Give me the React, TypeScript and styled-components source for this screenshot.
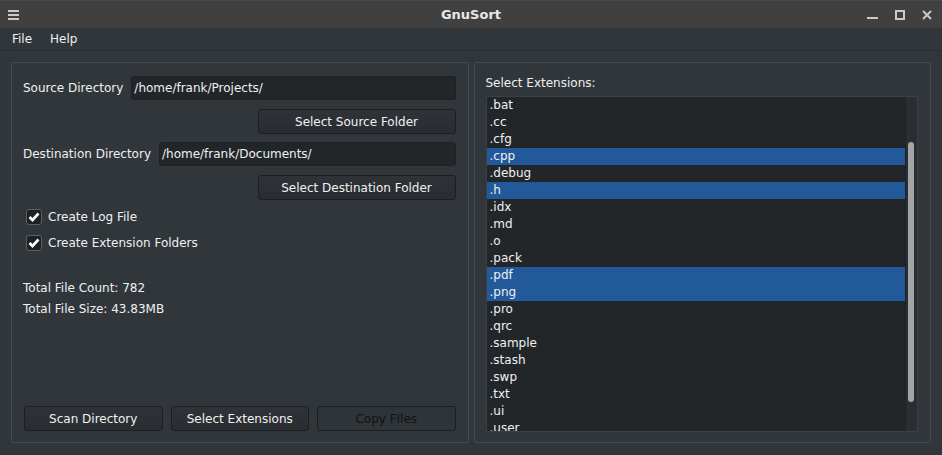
import React, { FC } from "react";
import styled, { createGlobalStyle } from "styled-components";

const GlobalStyle = createGlobalStyle`
  html, body {
    margin: 0;
    padding: 0;
    background: #31363b;
  }
  body {
    font-family: "DejaVu Sans", "Noto Sans", sans-serif;
    font-size: 12px;
    color: #eff0f1;
  }
  * {
    box-sizing: border-box;
  }
`;

const Window = styled.div`
  width: 942px;
  height: 455px;
  display: flex;
  flex-direction: column;
  background: #31363b;
  overflow: hidden;
`;

const TitleBar = styled.div`
  height: 28px;
  flex-shrink: 0;
  background: #404040;
  border-top: 1px solid #4a4a4a;
  display: flex;
  align-items: center;
  padding: 0 8px;
  position: relative;
`;

const Title = styled.div`
  position: absolute;
  left: 0;
  right: 0;
  text-align: center;
  font-weight: bold;
  font-size: 13px;
  color: #e8e8e8;
  pointer-events: none;
`;

const WinControls = styled.div`
  margin-left: auto;
  display: flex;
  align-items: center;
  gap: 17px;
  padding-right: 2px;
`;

const MenuBar = styled.div`
  height: 23px;
  flex-shrink: 0;
  display: flex;
  align-items: center;
  padding-left: 3px;
  border-bottom: 1px solid #2a2e32;
`;

const MenuItem = styled.span`
  padding: 0 9px;
  color: #eff0f1;
`;

const Main = styled.div`
  flex: 1;
  min-height: 0;
  display: flex;
  gap: 5px;
  padding: 11px 11px 12px 11px;
`;

const Panel = styled.div`
  flex: 1;
  min-height: 0;
  border: 1px solid #454a4f;
  border-radius: 2px;
  display: flex;
  flex-direction: column;
`;

const LeftPanel = styled(Panel)`
  padding: 13px 12px 11px 11px;
`;

const RightPanel = styled(Panel)`
  padding: 12px 12px 10px 11px;
`;

const FieldRow = styled.div`
  display: flex;
  align-items: center;
  gap: 8px;
`;

const Label = styled.span`
  white-space: nowrap;
  color: #eff0f1;
`;

const TextInput = styled.div`
  flex: 1;
  height: 24px;
  background: #232629;
  border: 1px solid #1f2225;
  border-radius: 3px;
  display: flex;
  align-items: center;
  padding: 0 2px;
  color: #eff0f1;
`;

const ButtonRow = styled.div`
  display: flex;
  justify-content: flex-end;
  margin: 9px 0 8px;
`;

const Button = styled.button<{ $width?: number; $disabled?: boolean }>`
  width: ${(p) => (p.$width ? `${p.$width}px` : "auto")};
  flex: ${(p) => (p.$width ? "none" : "1")};
  height: 25px;
  font-family: inherit;
  font-size: 12px;
  color: ${(p) => (p.$disabled ? "#111315" : "#eff0f1")};
  background: ${(p) =>
    p.$disabled ? "#2f3438" : "linear-gradient(#2f3337, #292d31)"};
  border: 1px solid #1c1f22;
  border-radius: 3px;
  padding: 0;
`;

const CheckList = styled.div`
  display: flex;
  flex-direction: column;
  gap: 10px;
  margin-top: 1px;
`;

const CheckRow = styled.label`
  display: flex;
  align-items: center;
  gap: 6px;
  height: 16px;
  padding-left: 3px;
`;

const Box = styled.span`
  width: 16px;
  height: 16px;
  border: 1px solid #5a5f64;
  background: #1e2124;
  border-radius: 3px;
  display: flex;
  align-items: center;
  justify-content: center;
`;

const Stats = styled.div`
  margin-top: 29px;
  display: flex;
  flex-direction: column;
  gap: 5px;
  line-height: 16px;
`;

const Footer = styled.div`
  margin-top: auto;
  display: flex;
  gap: 8px;
  padding-left: 1px;
`;

const ListCaption = styled.div`
  height: 21px;
  line-height: 16px;
  color: #eff0f1;
`;

const ListBox = styled.div`
  flex: 1;
  display: flex;
  background: #232629;
  border: 1px solid #3b4045;
  overflow: hidden;
  min-height: 0;
`;

const Items = styled.div`
  flex: 1;
  overflow: hidden;
`;

const Item = styled.div<{ $selected?: boolean }>`
  height: 17px;
  line-height: 17px;
  padding-left: 3px;
  background: ${(p) => (p.$selected ? "#22599b" : "transparent")};
  color: #eff0f1;
  white-space: nowrap;
`;

const ScrollTrack = styled.div`
  width: 12px;
  background: #2a2e32;
  border-left: 1px solid #1f2225;
  position: relative;
`;

const ScrollThumb = styled.div`
  position: absolute;
  left: 2px;
  width: 6px;
  top: 45px;
  height: 260px;
  background: #a3a5a7;
  border-radius: 3px;
`;

const Hamburger = () => (
  <svg width="11" height="10" viewBox="0 0 11 10">
    <rect x="0" y="0" width="11" height="2" fill="#c9c9c9" />
    <rect x="0" y="4" width="11" height="2" fill="#c9c9c9" />
    <rect x="0" y="8" width="11" height="2" fill="#c9c9c9" />
  </svg>
);

const MinIcon = () => (
  <svg width="11" height="11" viewBox="0 0 11 11">
    <rect x="0" y="8" width="11" height="2" fill="#c9c9c9" />
  </svg>
);

const MaxIcon = () => (
  <svg width="10" height="10" viewBox="0 0 10 10">
    <rect x="1" y="1" width="8" height="8" fill="none" stroke="#c9c9c9" strokeWidth="2" />
  </svg>
);

const CloseIcon = () => (
  <svg width="10" height="10" viewBox="0 0 10 10">
    <path d="M1 1 L9 9 M9 1 L1 9" stroke="#c9c9c9" strokeWidth="2" />
  </svg>
);

const Check = () => (
  <svg width="12" height="10" viewBox="0 0 12 10">
    <path d="M1.5 5 L4.5 8 L10.5 1.5" fill="none" stroke="#ffffff" strokeWidth="2.6" />
  </svg>
);

const extensions: { name: string; selected?: boolean }[] = [
  { name: ".bat" },
  { name: ".cc" },
  { name: ".cfg" },
  { name: ".cpp", selected: true },
  { name: ".debug" },
  { name: ".h", selected: true },
  { name: ".idx" },
  { name: ".md" },
  { name: ".o" },
  { name: ".pack" },
  { name: ".pdf", selected: true },
  { name: ".png", selected: true },
  { name: ".pro" },
  { name: ".qrc" },
  { name: ".sample" },
  { name: ".stash" },
  { name: ".swp" },
  { name: ".txt" },
  { name: ".ui" },
  { name: ".user" },
];

const App: FC = () => {
  return (
    <>
      <GlobalStyle />
      <Window>
        <TitleBar>
          <Hamburger />
          <Title>GnuSort</Title>
          <WinControls>
            <MinIcon />
            <MaxIcon />
            <CloseIcon />
          </WinControls>
        </TitleBar>
        <MenuBar>
          <MenuItem>File</MenuItem>
          <MenuItem>Help</MenuItem>
        </MenuBar>
        <Main>
          <LeftPanel>
            <FieldRow>
              <Label>Source Directory</Label>
              <TextInput>/home/frank/Projects/</TextInput>
            </FieldRow>
            <ButtonRow>
              <Button $width={198}>Select Source Folder</Button>
            </ButtonRow>
            <FieldRow>
              <Label>Destination Directory</Label>
              <TextInput>/home/frank/Documents/</TextInput>
            </FieldRow>
            <ButtonRow>
              <Button $width={198}>Select Destination Folder</Button>
            </ButtonRow>
            <CheckList>
              <CheckRow>
                <Box>
                  <Check />
                </Box>
                Create Log File
              </CheckRow>
              <CheckRow>
                <Box>
                  <Check />
                </Box>
                Create Extension Folders
              </CheckRow>
            </CheckList>
            <Stats>
              <span>Total File Count: 782</span>
              <span>Total File Size: 43.83MB</span>
            </Stats>
            <Footer>
              <Button>Scan Directory</Button>
              <Button>Select Extensions</Button>
              <Button $disabled>Copy FIles</Button>
            </Footer>
          </LeftPanel>
          <RightPanel>
            <ListCaption>Select Extensions:</ListCaption>
            <ListBox>
              <Items>
                {extensions.map((e) => (
                  <Item key={e.name} $selected={e.selected}>
                    {e.name}
                  </Item>
                ))}
              </Items>
              <ScrollTrack>
                <ScrollThumb />
              </ScrollTrack>
            </ListBox>
          </RightPanel>
        </Main>
      </Window>
    </>
  );
};

export default App;
